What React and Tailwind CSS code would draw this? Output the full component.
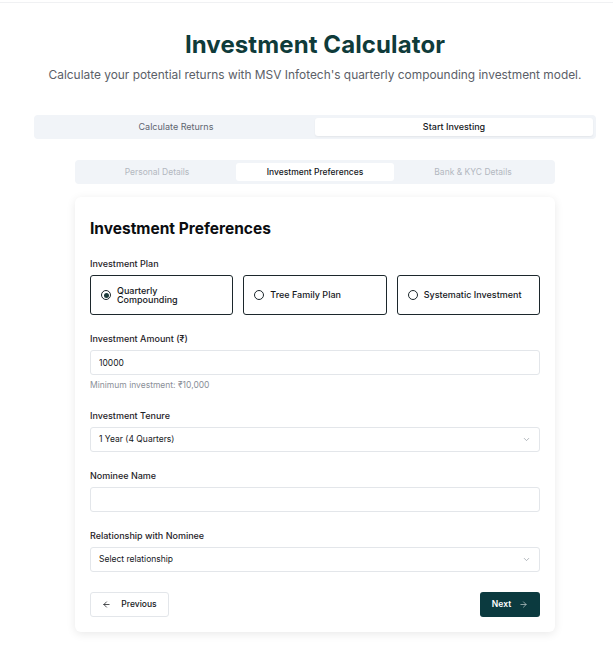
import React, { useState } from 'react';
import { ArrowLeft, ArrowRight, ChevronDown } from 'lucide-react';

const font = { fontFamily: 'Inter, "Noto Sans", sans-serif' };

const plans = [
  { id: 'quarterly', label: 'Quarterly Compounding', wrap: true },
  { id: 'tree', label: 'Tree Family Plan' },
  { id: 'systematic', label: 'Systematic Investment' },
];

const Field = ({ label, children }) => (
  <div className="flex flex-col">
    <label className="text-[9px] leading-[13px] font-medium text-[#1f2328] mb-[5px]">{label}</label>
    {children}
  </div>
);

const App = () => {
  const [plan, setPlan] = useState('quarterly');

  return (
    <div className="min-h-screen bg-white" style={font}>
      <div className="h-[3px] border-b border-[#f0f1f3]" />

      <div className="pl-[34px] pr-[17px] pt-[27px]">
        <h1 className="text-center text-[24px] leading-[30px] font-bold text-[#0f3b3a] tracking-[0.1px]">
          Investment Calculator
        </h1>
        <p className="text-center text-[11.9px] leading-[16px] text-[#5b6068] mt-[7px]">
          Calculate your potential returns with MSV Infotech's quarterly compounding investment model.
        </p>

        <div className="mt-[32px] grid grid-cols-2 bg-[#f1f4f8] rounded-[4px] p-[3px]">
          <button className="h-[18px] text-[9px] text-[#5f6570] rounded-[3px]">Calculate Returns</button>
          <button className="h-[18px] text-[9px] text-[#15181c] font-medium bg-white rounded-[3px] shadow-[0_1px_2px_rgba(0,0,0,0.06)]">
            Start Investing
          </button>
        </div>

        <div className="w-[480px] mx-auto">
          <div className="mt-[21px] grid grid-cols-3 bg-[#f1f4f8] rounded-[4px] p-[3px]">
            <div className="h-[18px] flex items-center justify-center text-[8.5px] text-[#b3b8c0]">Personal Details</div>
            <div className="h-[18px] flex items-center justify-center text-[8.5px] text-[#15181c] font-medium bg-white rounded-[3px]">
              Investment Preferences
            </div>
            <div className="h-[18px] flex items-center justify-center text-[8.5px] text-[#b3b8c0]">Bank &amp; KYC Details</div>
          </div>

          <div className="mt-[13px] bg-white rounded-[6px] shadow-[0_2px_10px_rgba(0,0,0,0.09)] px-[15px] pt-[21px] pb-[15px]">
            <h2 className="text-[15.5px] leading-[22px] font-bold text-[#0b0d10]">Investment Preferences</h2>

            <div className="mt-[17px] flex flex-col gap-[17px]">
              <Field label="Investment Plan">
                <div className="grid grid-cols-3 gap-[10px]">
                  {plans.map((p) => (
                    <button
                      key={p.id}
                      onClick={() => setPlan(p.id)}
                      className="h-[40px] flex items-center gap-[6px] pl-[10px] pr-[6px] border border-[#1c272c] rounded-[3px] text-left"
                    >
                      <span className="w-[10px] h-[10px] shrink-0 rounded-full border-[1.3px] border-[#1c272c] flex items-center justify-center">
                        {plan === p.id && <span className="w-[5px] h-[5px] rounded-full bg-[#1c3a3a]" />}
                      </span>
                      <span className={`text-[9px] font-medium text-[#15181c] ${p.wrap ? 'leading-[9px] w-[70px]' : 'leading-[12px]'}`}>
                        {p.label}
                      </span>
                    </button>
                  ))}
                </div>
              </Field>

              <Field label="Investment Amount (₹)">
                <input
                  defaultValue="10000"
                  className="h-[25px] border border-[#e3e6ea] rounded-[3px] px-[8px] text-[8.5px] text-[#15181c] outline-none"
                />
                <span className="mt-[4px] text-[8.5px] leading-[13px] text-[#8b9098]">Minimum investment: ₹10,000</span>
              </Field>

              <Field label="Investment Tenure">
                <div className="h-[25px] border border-[#e3e6ea] rounded-[3px] px-[8px] flex items-center justify-between">
                  <span className="text-[8.5px] text-[#15181c]">1 Year (4 Quarters)</span>
                  <ChevronDown size={9} className="text-[#9aa0a8]" />
                </div>
              </Field>

              <Field label="Nominee Name">
                <input className="h-[25px] border border-[#e3e6ea] rounded-[3px] px-[8px] text-[8.5px] outline-none" />
              </Field>

              <Field label="Relationship with Nominee">
                <div className="h-[25px] border border-[#e3e6ea] rounded-[3px] px-[8px] flex items-center justify-between">
                  <span className="text-[8.5px] text-[#15181c]">Select relationship</span>
                  <ChevronDown size={9} className="text-[#9aa0a8]" />
                </div>
              </Field>
            </div>

            <div className="mt-[20px] flex items-center justify-between">
              <button className="h-[25px] w-[79px] border border-[#e3e6ea] rounded-[3px] flex items-center justify-center gap-[10px] text-[8.5px] font-medium text-[#15181c]">
                <ArrowLeft size={9} />
                Previous
              </button>
              <button className="h-[25px] w-[60px] bg-[#0b3a3f] rounded-[3px] flex items-center justify-center gap-[8px] text-[8.5px] font-semibold text-white">
                Next
                <ArrowRight size={9} className="text-[#b7c4c6]" />
              </button>
            </div>
          </div>
        </div>
      </div>
    </div>
  );
};

export default App;
